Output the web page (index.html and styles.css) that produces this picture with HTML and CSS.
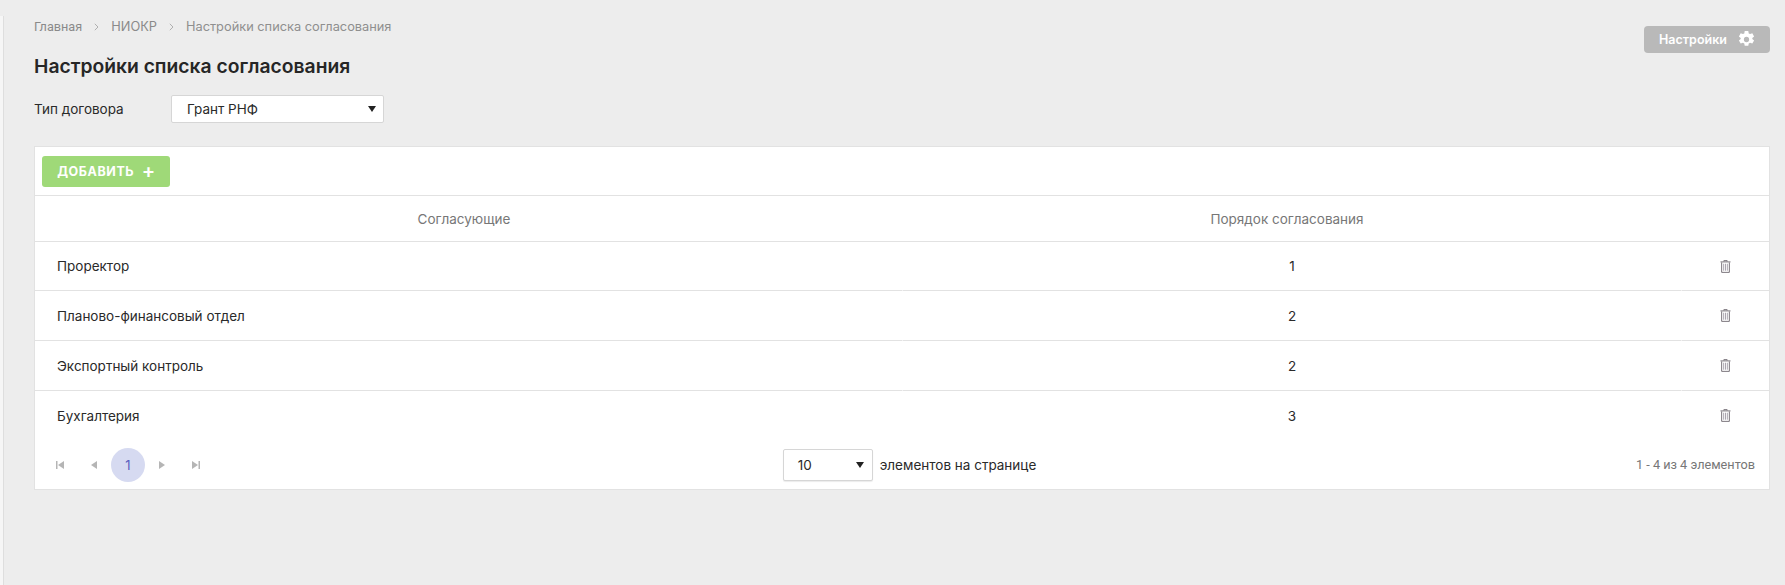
FILE: index.html
```html
<!DOCTYPE html>
<html lang="ru">
<head>
    <meta charset="UTF-8">
    <meta name="viewport" content="width=device-width, initial-scale=1.0">
    <title>Настройки списка согласования</title>
    <link rel="stylesheet" href="styles.css">
</head>
<body>
    <svg class="icon-defs" width="0" height="0" aria-hidden="true">
        <symbol id="trash" viewBox="0 0 12 14">
            <path d="M4.200 1.500V.6h3.600v.9M.5 2h11M1.800 2.600v10.800h8.400V2.600" fill="none" stroke="#6e6870" stroke-width="1"/>
            <path d="M4 4v7.600M6 4v7.600M8 4v7.600" fill="none" stroke="#a39ca6" stroke-width="1"/>
        </symbol>
        <symbol id="chevron" viewBox="0 0 5 8">
            <path d="M.8.8 4 4 .8 7.200" fill="none" stroke="#b0b0b0" stroke-width="1"/>
        </symbol>
    </svg>
    <div class="page">
        <main class="content">
            <div class="top-row">
                <nav class="breadcrumb">
                    <a class="home" href="#">Главная</a>
                    <svg class="sep" width="5" height="8"><use href="#chevron"/></svg>
                    <a href="#">НИОКР</a>
                    <svg class="sep" width="5" height="8"><use href="#chevron"/></svg>
                    <span class="current">Настройки списка согласования</span>
                </nav>
                <button class="settings-btn" type="button">
                    Настройки
                    <svg width="19" height="19" viewBox="0 0 18 18">
                        <path fill="#fff" fill-rule="evenodd" d="M7.300 1h3.400l.4 2.200 1.300.7 2.100-.8 1.700 3-1.700 1.400v1l1.700 1.400-1.700 3-2.100-.8-1.300.7-.4 2.200H7.300l-.4-2.200-1.300-.7-2.100.8-1.700-3 1.700-1.400v-1L1.800 6.100l1.700-3 2.100.8 1.300-.7zM9 6.500a2.500 2.500 0 1 0 0 5 2.500 2.500 0 0 0 0-5z"/>
                    </svg>
                </button>
            </div>
            <h1 class="page-title">Настройки списка согласования</h1>
            <div class="filter-row">
                <label class="filter-label">Тип договора</label>
                <div class="select select-type">
                    <span>Грант РНФ</span>
                    <i class="caret"></i>
                </div>
            </div>
            <section class="card">
                <div class="toolbar">
                    <button class="add-btn" type="button">ДОБАВИТЬ <span class="plus">+</span></button>
                </div>
                <table class="grid">
                    <colgroup>
                        <col class="col-head-name">
                        <col>
                        <col class="col-action">
                    </colgroup>
                    <thead>
                        <tr>
                            <th>Согласующие</th>
                            <th>Порядок согласования</th>
                            <th></th>
                        </tr>
                    </thead>
                </table>
                <table class="grid">
                    <colgroup>
                        <col class="col-body-name">
                        <col>
                        <col class="col-action">
                    </colgroup>
                    <tbody>
                        <tr>
                            <td class="name">Проректор</td>
                            <td>1</td>
                            <td><svg class="trash" width="11" height="13"><use href="#trash"/></svg></td>
                        </tr>
                        <tr>
                            <td class="name">Планово-финансовый отдел</td>
                            <td>2</td>
                            <td><svg class="trash" width="11" height="13"><use href="#trash"/></svg></td>
                        </tr>
                        <tr>
                            <td class="name">Экспортный контроль</td>
                            <td>2</td>
                            <td><svg class="trash" width="11" height="13"><use href="#trash"/></svg></td>
                        </tr>
                        <tr>
                            <td class="name">Бухгалтерия</td>
                            <td>3</td>
                            <td><svg class="trash" width="11" height="13"><use href="#trash"/></svg></td>
                        </tr>
                    </tbody>
                </table>
                <div class="pager">
                    <div class="pager-nav">
                        <span class="nav-btn">
                            <svg width="8" height="8" viewBox="0 0 8 8"><path fill="#b5b5b5" d="M0 0h1.500v8H0zM8 0v8L2 4z"/></svg>
                        </span>
                        <span class="nav-btn">
                            <svg width="6" height="8" viewBox="0 0 6 8"><path fill="#b5b5b5" d="M6 0v8L0 4z"/></svg>
                        </span>
                        <span class="page-num">1</span>
                        <span class="nav-btn">
                            <svg width="6" height="8" viewBox="0 0 6 8"><path fill="#b5b5b5" d="M0 0v8l6-4z"/></svg>
                        </span>
                        <span class="nav-btn">
                            <svg width="8" height="8" viewBox="0 0 8 8"><path fill="#b5b5b5" d="M0 0v8l6-4zM6.500 0H8v8H6.500z"/></svg>
                        </span>
                    </div>
                    <div class="pager-size">
                        <div class="select select-size">
                            <span>10</span>
                            <i class="caret"></i>
                        </div>
                        <span>элементов на странице</span>
                    </div>
                    <div class="pager-info">1 - 4 из 4 элементов</div>
                </div>
            </section>
        </main>
    </div>
</body>
</html>
```

FILE: styles.css
```css
html, body {
    height: 100%;
}
body {
    margin: 0;
    background: #ededed;
    font-family: "Inter", "Open Sans", sans-serif;
    font-size: 13.5px;
    color: #2a2a2a;
    overflow: hidden;
}
.icon-defs {
    display: block;
    height: 0;
}
.page {
    box-sizing: border-box;
    height: 100%;
    padding-top: 16px;
}
.content {
    box-sizing: border-box;
    height: 100%;
    margin-left: 3px;
    padding: 0 15px 0 30px;
    border-left: 1px solid #dedede;
    box-shadow: -3px 0 0 #f6f6f6;
}
.top-row {
    display: flex;
    justify-content: space-between;
    align-items: flex-start;
    height: 37px;
}
.breadcrumb {
    display: flex;
    align-items: center;
    gap: 12px;
    height: 21px;
    font-size: 12.800px;
    color: #8f8f8f;
}
.breadcrumb a {
    color: #8a8a8a;
    text-decoration: none;
}
.breadcrumb .home {
    font-family: "Roboto", sans-serif;
    font-size: 12.700px;
}
.settings-btn {
    display: flex;
    align-items: center;
    justify-content: space-between;
    box-sizing: border-box;
    width: 126px;
    height: 27px;
    margin: 10px 0 0;
    padding: 0 14px 0 15px;
    background: #b9b9b9;
    border: 0;
    border-radius: 4px;
    color: #fff;
    font: 600 12.500px "Inter", "Open Sans", sans-serif;
}
.page-title {
    margin: 0;
    height: 27px;
    line-height: 26px;
    font-size: 19.300px;
    font-weight: 600;
    color: #262626;
}
.filter-row {
    display: flex;
    align-items: center;
    margin-top: 15px;
    height: 28px;
}
.filter-label {
    width: 137px;
}
.select {
    display: flex;
    align-items: center;
    justify-content: space-between;
    box-sizing: border-box;
    background: #fff;
    border: 1px solid #d6d6d6;
    border-radius: 2px;
}
.select-type {
    width: 213px;
    height: 28px;
    padding: 0 7px 0 15px;
}
.select-size {
    width: 90px;
    height: 32px;
    padding: 0 8px 0 14px;
    box-shadow: 0 1px 1px rgba(0, 0, 0, 0.08);
}
.caret {
    width: 0;
    height: 0;
    border-left: 4px solid transparent;
    border-right: 4px solid transparent;
    border-top: 6px solid #222;
}
.card {
    margin-top: 23px;
    background: #fff;
    border: 1px solid #e2e2e2;
}
.toolbar {
    box-sizing: border-box;
    height: 49px;
    padding: 9px 7px;
    border-bottom: 1px solid #e2e2e2;
}
.add-btn {
    box-sizing: border-box;
    width: 128px;
    height: 31px;
    padding: 0 0 0 1px;
    background: #9fd978;
    border: 0;
    border-radius: 3px;
    color: #fff;
    font: 700 12.500px "Inter", "Open Sans", sans-serif;
    letter-spacing: 0.6px;
}
.plus {
    margin-left: 4px;
    font-size: 20px;
    font-weight: 600;
    line-height: 0;
    vertical-align: -2px;
}
.grid {
    width: 100%;
    table-layout: fixed;
    border-collapse: separate;
    border-spacing: 0;
}
.col-head-name {
    width: 858px;
}
.col-body-name {
    width: 867px;
}
.col-action {
    width: 88px;
}
.grid th {
    height: 45px;
    padding: 0;
    font-weight: 400;
    color: #777;
    border-bottom: 1px solid #e2e2e2;
}
.grid td {
    height: 49px;
    padding: 0;
    text-align: center;
    border-bottom: 1px solid #e2e2e2;
}
.grid td + td {
    border-left: 1px solid #fff;
}
.grid tbody tr:first-child td {
    height: 48px;
}
.grid tbody tr:last-child td {
    height: 49px;
    border-bottom: 0;
}
.grid td.name {
    padding-left: 22px;
    text-align: left;
}
.trash {
    display: block;
    margin: 0 auto;
}
.pager {
    display: grid;
    grid-template-columns: 1fr auto 1fr;
    align-items: center;
    height: 49px;
    padding: 0 14px 0 8px;
}
.pager-nav {
    display: flex;
    align-items: center;
}
.nav-btn {
    display: flex;
    align-items: center;
    justify-content: center;
    width: 34px;
    height: 34px;
}
.page-num {
    display: flex;
    align-items: center;
    justify-content: center;
    width: 34px;
    height: 34px;
    border-radius: 50%;
    background: #d6daf1;
    color: #5a5fc0;
    font-size: 13px;
}
.pager-size {
    display: flex;
    align-items: center;
    gap: 7px;
    margin-left: 21px;
}
.pager-info {
    text-align: right;
    font-family: "Roboto", sans-serif;
    font-size: 12.700px;
    color: #777;
}
```
